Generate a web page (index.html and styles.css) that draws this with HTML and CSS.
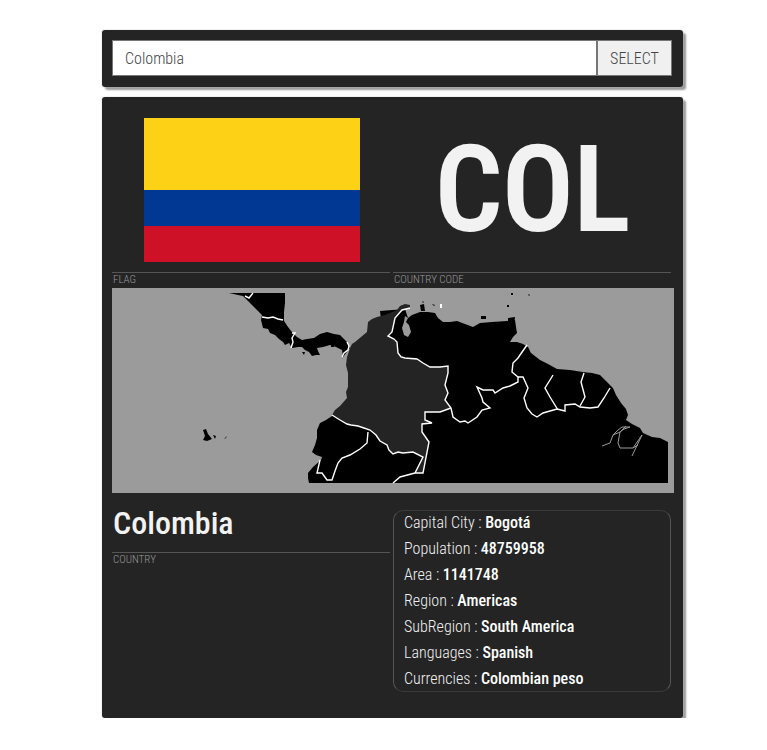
FILE: index.html
```html
<!DOCTYPE html>
<html>

<head>
    <title>Country Info</title>
    <meta name="viewport" content="width=device-width, initial-scale=1.0">
    <link rel="stylesheet" href="styles.css">
</head>

<body>

    <form class="panel search">
        <input type="text" class="search-input" value="Colombia">
        <button class="search-btn" type="button">SELECT</button>
    </form>

    <div class="panel card">
        <div class="row">
            <div>
                <div class="cell flag-cell">
                    <div class="flag">
                        <div class="yellow"></div>
                        <div class="blue"></div>
                        <div class="red"></div>
                    </div>
                </div>
                <div class="label">FLAG</div>
            </div>
            <div>
                <div class="cell code">COL</div>
                <div class="label">COUNTRY CODE</div>
            </div>
        </div>

        <!-- map, coordinates are page pixels -->
        <svg class="map" viewBox="112 288 562 205">
            <rect class="sea" x="112" y="288" width="562" height="205" />
            <path class="land" d="M229 293L238 295L243 296L247 300L251 304L256 309L262 315L261 320L262 324L263 328L268 329L270 333L275 335L279 339L283 342L285 345L289 343L292 348L298 347L302 347L305 350L309 352L312 356L316 355L320 355L318 351L317 348L323 347L330 345L336 347L342 350L343 357L350 348L347 342L340 335L334 334L327 332L320 334L314 338L307 339L302 340L297 337L292 332L288 327L284 321L284 312L285 303L285 293Z" />
            <path class="land" d="M380 311L405 309L408 318L412 315L420 312L428 312L435 313L438 318L443 322L450 322L457 321L465 324L473 327L480 323L492 322L507 321L515 320L516 327L517 333L513 337L510 342L517 342L523 344L528 347L531 353L540 360L548 364L557 369L570 370L583 372L592 373L600 375L606 381L613 388L616 395L621 403L626 409L628 415L626 420L632 424L640 428L643 433L652 437L660 438L668 442L668 483L309 483L308 478L308 473L313 467L321 460L322 457L316 455L312 452L315 445L317 438L317 430L320 423L326 420L332 416L390 400Z" />
            <path class="country" d="M350 348L352 344L355 342L361 337L367 332L368 322L372 319L377 317L385 315L397 310L400 306L405 304L410 305L410 308L402 310L395 318L392 332L388 336L397 342L398 353L405 358L417 359L430 367L448 366L448 373L445 385L448 393L445 400L451 408L440 412L425 412L425 420L432 423L422 424L422 432L429 442L423 473L415 473L423 457L413 452L403 453L393 454L387 445L380 441L370 430L358 426L347 424L332 415L335 410L340 406L347 398L346 392L348 387L348 373L346 365L347 357Z" />
            <path class="sea-fill" d="M405 316L408 318L406 322L409 325L411 332L408 337L404 335L402 328L404 322Z" />
            <path class="land" d="M420 305L424 304L425 311L421 311ZM508 318L515 317L514 326L508 325ZM481 316L486 316L486 319L481 319ZM203 430L206 429L208 434L212 439L207 441L203 440L205 436ZM213 435L216 436L215 439ZM224 439L227 436L226 438ZM331 344L334 344L334 347L331 347ZM302 352L305 352L304 355ZM511 293L513 293L513 295L511 295ZM528 294L530 295L529 296ZM507 305L509 305L509 307L507 307ZM432 304L435 305L434 306ZM422 301L424 302L423 303Z" />
            <rect class="dot" x="440" y="304" width="2" height="4" />
            <g class="border">
                <path d="M245 296L249 298L253 293" />
                <path d="M262 317L268 318L273 317L278 319L283 320" />
                <path d="M292 333L295 333L292 338L293 342L291 348" />
                <path d="M342 357L344 353L348 350L349 346L347 342" />
                <path d="M410 308L402 310L395 318L392 332L388 336L394 339L397 342L398 353L401 357L405 358L417 359L423 363L430 367L440 367L448 366L448 373L445 385L448 393L445 400L451 408L453 417L460 422L465 421L468 423L477 417L482 410L490 408L483 402L482 398L477 387L483 390L493 390L495 393L503 388L510 386L518 382L518 377L512 372L513 363L518 358L520 355L527 345" />
                <path d="M451 408L440 412L425 412L425 420L432 423L422 424L422 432L429 442L423 473L415 473L423 457L413 452L403 453L398 452L393 454L389 450L387 445L380 441L376 435L370 430L364 428L358 426L351 425L347 424L340 420L332 415" />
                <path d="M415 473L400 477L393 483" />
                <path d="M368 432L367 443L360 449L350 455L342 458L338 463L335 471L332 480L327 480L322 473L317 473L320 460" />
                <path d="M518 377L523 377L528 388L524 398L527 408L532 414L537 417L543 413L557 409L565 411L565 405L575 404L580 407L590 408L598 407L604 398L610 388" />
                <path d="M553 375L550 380L545 388L550 397L558 410" />
                <path d="M584 373L581 382L585 397L580 406" />
            </g>
            <path class="delta" d="M602 446L610 443L613 435L618 430L622 427L630 427L624 429L620 432L618 443L620 448L633 448L642 435L632 456M633 448L638 445M613 435L620 432L626 426" />
            <rect class="margin-right" x="668" y="288" width="6" height="205" />
        </svg>

        <div class="row info-row">
            <div class="name-box">
                <div class="name">Colombia</div>
                <div class="label">COUNTRY</div>
            </div>
            <div class="facts">
                <div class="fact">Capital City : <b>Bogotá</b></div>
                <div class="fact">Population : <b>48759958</b></div>
                <div class="fact">Area : <b>1141748</b></div>
                <div class="fact">Region : <b>Americas</b></div>
                <div class="fact">SubRegion : <b>South America</b></div>
                <div class="fact">Languages : <b>Spanish</b></div>
                <div class="fact">Currencies : <b>Colombian peso</b></div>
            </div>
        </div>
    </div>

</body>

</html>
```

FILE: styles.css
```css
body {
    margin: 0;
    padding: 30px 0 0 102px;
    background: white;
    font-family: "Roboto Condensed", Roboto, sans-serif;
    font-stretch: 75%;
}

.panel {
    width: 581px;
    box-sizing: border-box;
    background: #242424;
    border-radius: 3px;
    box-shadow: 0 0 2px #ccc, 3px 3px 2px #999;
}

.search {
    display: flex;
    height: 57px;
    padding: 10px 11px 11px 10px;
    margin: 0 0 10px;
}

.search-input {
    flex: 1;
    height: 36px;
    box-sizing: border-box;
    border: 1px solid #777;
    padding: 0 12px;
    font-family: inherit;
    font-stretch: inherit;
    font-size: 16px;
    font-weight: 300;
    color: #444;
}

.search-btn {
    width: 75px;
    height: 36px;
    box-sizing: border-box;
    border: 1px solid #777;
    background: #f0f0f0;
    font-family: inherit;
    font-stretch: inherit;
    font-size: 16px;
    font-weight: 300;
    color: #444;
}

.card {
    height: 621px;
    padding: 21px 10px 0;
}

.row {
    display: grid;
    grid-template-columns: 278px 278px;
    grid-column-gap: 3px;
}

.cell {
    height: 154px;
    border-bottom: 1px solid #555;
}

.flag-cell {
    display: flex;
    justify-content: center;
    padding-left: 2px;
}

.flag {
    width: 216px;
    height: 144px;
    display: flex;
    flex-direction: column;
}

.yellow {
    height: 72px;
    background: #fcd116;
}

.blue {
    height: 36px;
    background: #003893;
}

.red {
    height: 36px;
    background: #ce1126;
}

.code {
    color: #f2f2f2;
    font-size: 120px;
    font-weight: 600;
    letter-spacing: -1px;
    line-height: 144px;
    text-align: center;
}

.label {
    height: 15px;
    line-height: 14px;
    padding-left: 1px;
    font-size: 11px;
    font-weight: 300;
    color: #999;
}

.map {
    display: block;
    width: 562px;
    height: 205px;
}

.sea,
.sea-fill,
.margin-right {
    fill: #9b9b9b;
}

.land {
    fill: black;
}

.country {
    fill: #242424;
}

.dot {
    fill: white;
}

.border path {
    fill: none;
    stroke: white;
    stroke-width: 1.4;
}

.delta {
    fill: none;
    stroke: #9b9b9b;
    stroke-width: 1;
}

.info-row {
    margin-top: 17px;
}

.name-box {
    height: 60px;
}

.name {
    height: 42px;
    line-height: 27px;
    padding-left: 1px;
    border-bottom: 1px solid #555;
    color: #f2f2f2;
    font-size: 32px;
    font-weight: 500;
}

.facts {
    width: 278px;
    height: 182px;
    box-sizing: border-box;
    padding: 0 10px;
    border: 1px solid #3a3a3a;
    border-left-color: #555;
    border-right-color: #555;
    border-radius: 10px;
}

.fact {
    height: 26px;
    line-height: 24px;
    font-size: 16px;
    font-weight: 300;
    color: #f2f2f2;
}

.fact b {
    font-weight: 500;
    color: white;
}
```
